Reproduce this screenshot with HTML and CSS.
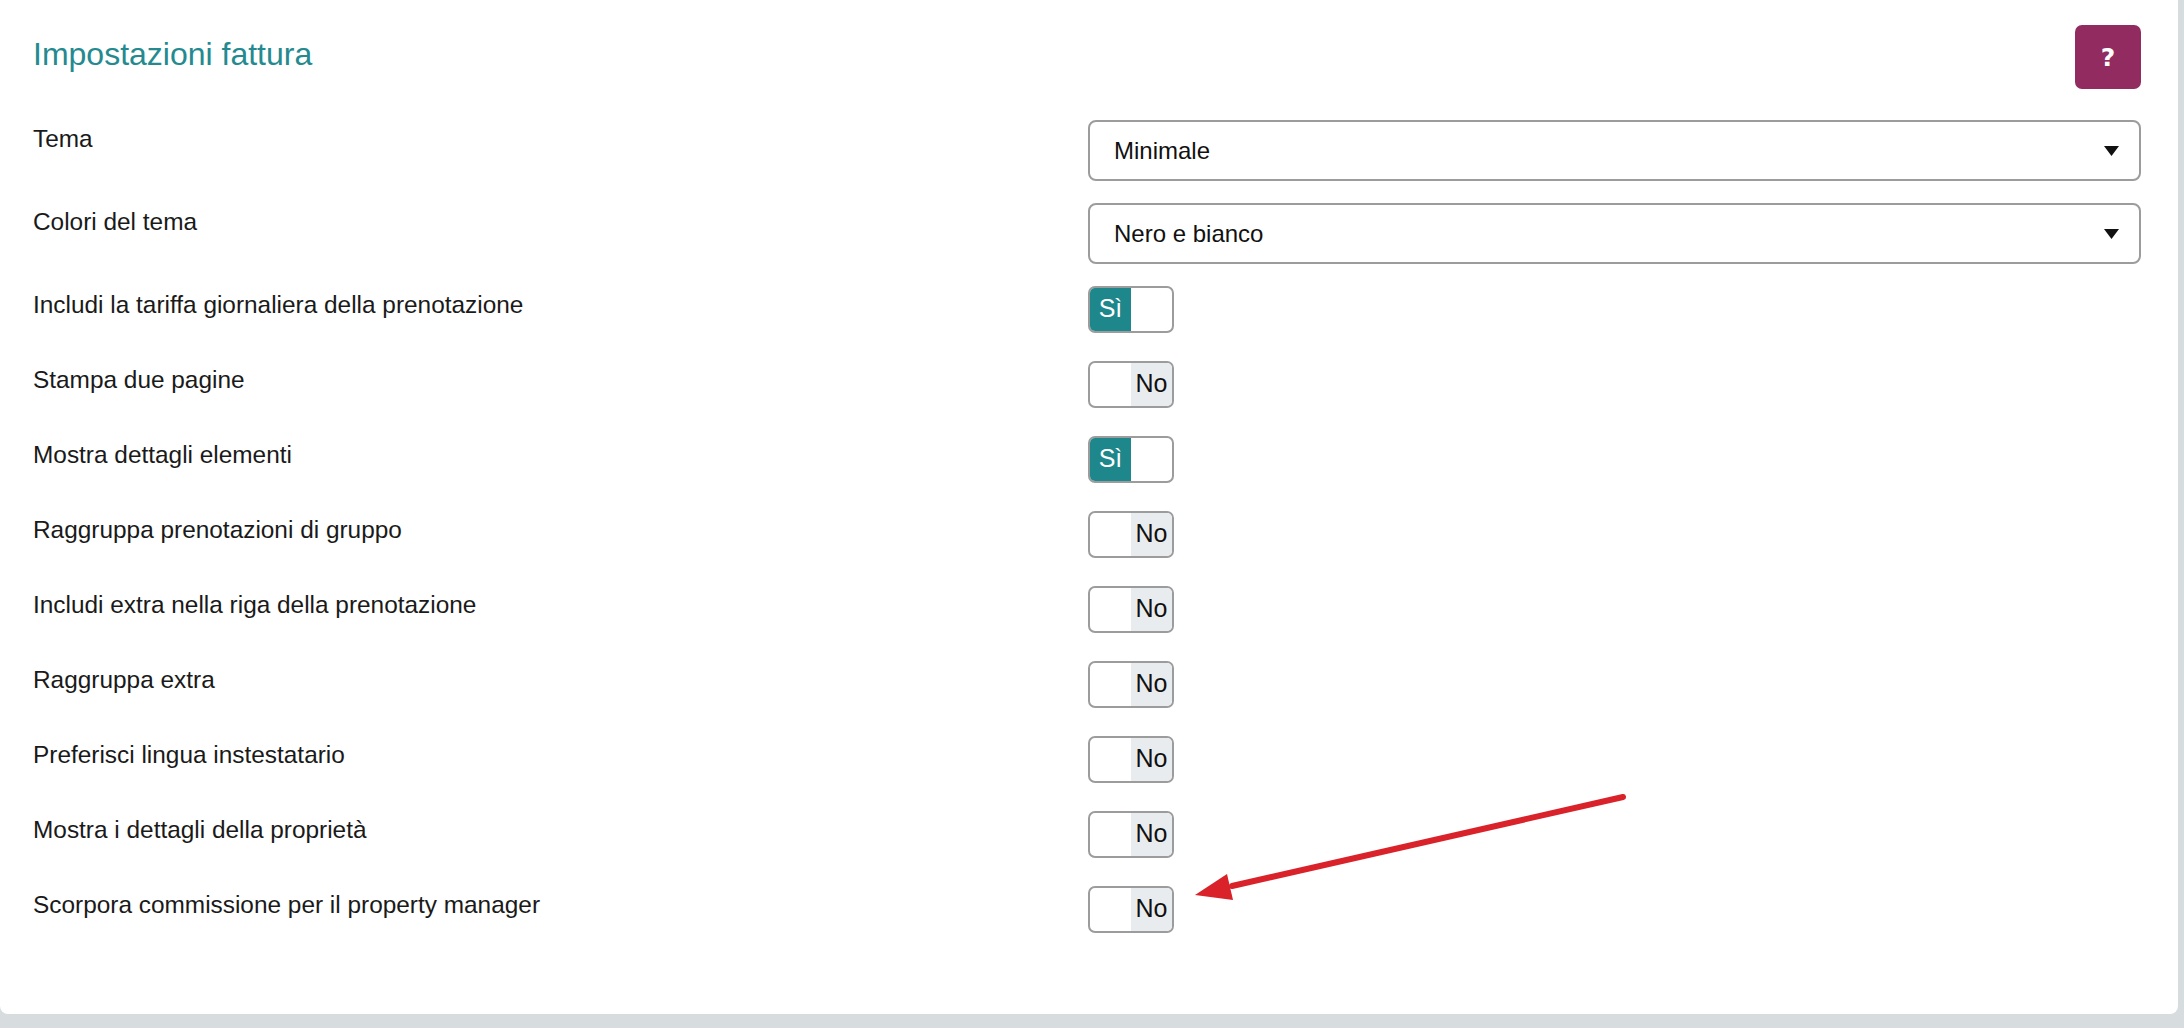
FILE: index.html
```html
<!DOCTYPE html>
<html lang="it">
<head>
    <meta charset="UTF-8">
    <meta name="viewport" content="width=device-width, initial-scale=1.0">
    <title>Impostazioni fattura</title>
    <link rel="stylesheet" href="styles.css">
</head>
<body>

    <div class="panel">
        <!-- Header -->
        <div class="panel-header">
            <h2>Impostazioni fattura</h2>
            <button class="help-button">?</button>
        </div>

        <!-- Select fields -->
        <div class="form-row select-row">
            <label>Tema</label>
            <div class="select-box">
                <span>Minimale</span>
                <svg class="caret" width="15" height="10" viewBox="0 0 15 10"><polygon points="0,0 15,0 7.5,10" fill="#111"/></svg>
            </div>
        </div>
        <div class="form-row select-row">
            <label>Colori del tema</label>
            <div class="select-box">
                <span>Nero e bianco</span>
                <svg class="caret" width="15" height="10" viewBox="0 0 15 10"><polygon points="0,0 15,0 7.5,10" fill="#111"/></svg>
            </div>
        </div>

        <!-- Switches -->
        <div class="form-row switch-row">
            <label>Includi la tariffa giornaliera della prenotazione</label>
            <div class="switch on"><span class="half left">Sì</span><span class="half right"></span></div>
        </div>
        <div class="form-row switch-row">
            <label>Stampa due pagine</label>
            <div class="switch off"><span class="half left"></span><span class="half right">No</span></div>
        </div>
        <div class="form-row switch-row">
            <label>Mostra dettagli elementi</label>
            <div class="switch on"><span class="half left">Sì</span><span class="half right"></span></div>
        </div>
        <div class="form-row switch-row">
            <label>Raggruppa prenotazioni di gruppo</label>
            <div class="switch off"><span class="half left"></span><span class="half right">No</span></div>
        </div>
        <div class="form-row switch-row">
            <label>Includi extra nella riga della prenotazione</label>
            <div class="switch off"><span class="half left"></span><span class="half right">No</span></div>
        </div>
        <div class="form-row switch-row">
            <label>Raggruppa extra</label>
            <div class="switch off"><span class="half left"></span><span class="half right">No</span></div>
        </div>
        <div class="form-row switch-row">
            <label>Preferisci lingua instestatario</label>
            <div class="switch off"><span class="half left"></span><span class="half right">No</span></div>
        </div>
        <div class="form-row switch-row">
            <label>Mostra i dettagli della proprietà</label>
            <div class="switch off"><span class="half left"></span><span class="half right">No</span></div>
        </div>
        <div class="form-row switch-row">
            <label>Scorpora commissione per il property manager</label>
            <div class="switch off"><span class="half left"></span><span class="half right">No</span></div>
        </div>

        <!-- Annotation arrow -->
        <svg class="annotation" width="470" height="140" viewBox="0 0 470 140">
            <line x1="443" y1="17" x2="52" y2="106" stroke="#d9222a" stroke-width="6" stroke-linecap="round"/>
            <polygon points="15,115 53,120 47,94" fill="#d9222a"/>
        </svg>
    </div>

</body>
</html>
```

FILE: styles.css
```css
body {
    margin: 0;
    padding: 0;
    background-color: #d7dcde;
    font-family: 'Liberation Sans', Arial, sans-serif;
    color: #1a1a1a;
}

.panel {
    position: relative;
    width: 2178px;
    height: 1014px;
    box-sizing: border-box;
    padding: 25px 37px 0 33px;
    background-color: #fff;
    border-radius: 0 0 8px 8px;
}

.panel-header {
    display: flex;
    justify-content: space-between;
    align-items: center;
    margin-bottom: 31px;
}

.panel-header h2 {
    margin: 0 0 6px 0;
    font-size: 32px;
    font-weight: normal;
    color: #248a90;
}

.help-button {
    width: 66px;
    height: 64px;
    border: none;
    border-radius: 7px;
    background-color: #922b5f;
    color: #fff;
    font-family: 'DejaVu Sans', sans-serif;
    font-size: 25px;
    font-weight: bold;
    cursor: pointer;
}

.form-row {
    display: grid;
    grid-template-columns: 1055px 1fr;
    align-items: start;
}

.form-row label {
    font-size: 24.4px;
    line-height: 36px;
    padding-top: 1px;
}

.select-row {
    margin-bottom: 22px;
}

.switch-row {
    margin-bottom: 28px;
}

.select-box {
    display: flex;
    justify-content: space-between;
    align-items: center;
    height: 61px;
    box-sizing: border-box;
    padding: 0 20px 0 24px;
    border: 2px solid #9c9c9c;
    border-radius: 8px;
    font-size: 24px;
    color: #111;
}

.switch {
    display: flex;
    width: 86px;
    height: 47px;
    box-sizing: border-box;
    border: 2px solid #9c9c9c;
    border-radius: 7px;
    overflow: hidden;
}

.switch .half {
    flex: 1;
    display: flex;
    align-items: center;
    justify-content: center;
    font-size: 25px;
    padding-bottom: 2px;
}

.switch.on .left {
    background-color: #1e878c;
    color: #fff;
}

.switch.off .right {
    background-color: #e9ecef;
    color: #111;
}

.annotation {
    position: absolute;
    left: 1180px;
    top: 780px;
}
```
